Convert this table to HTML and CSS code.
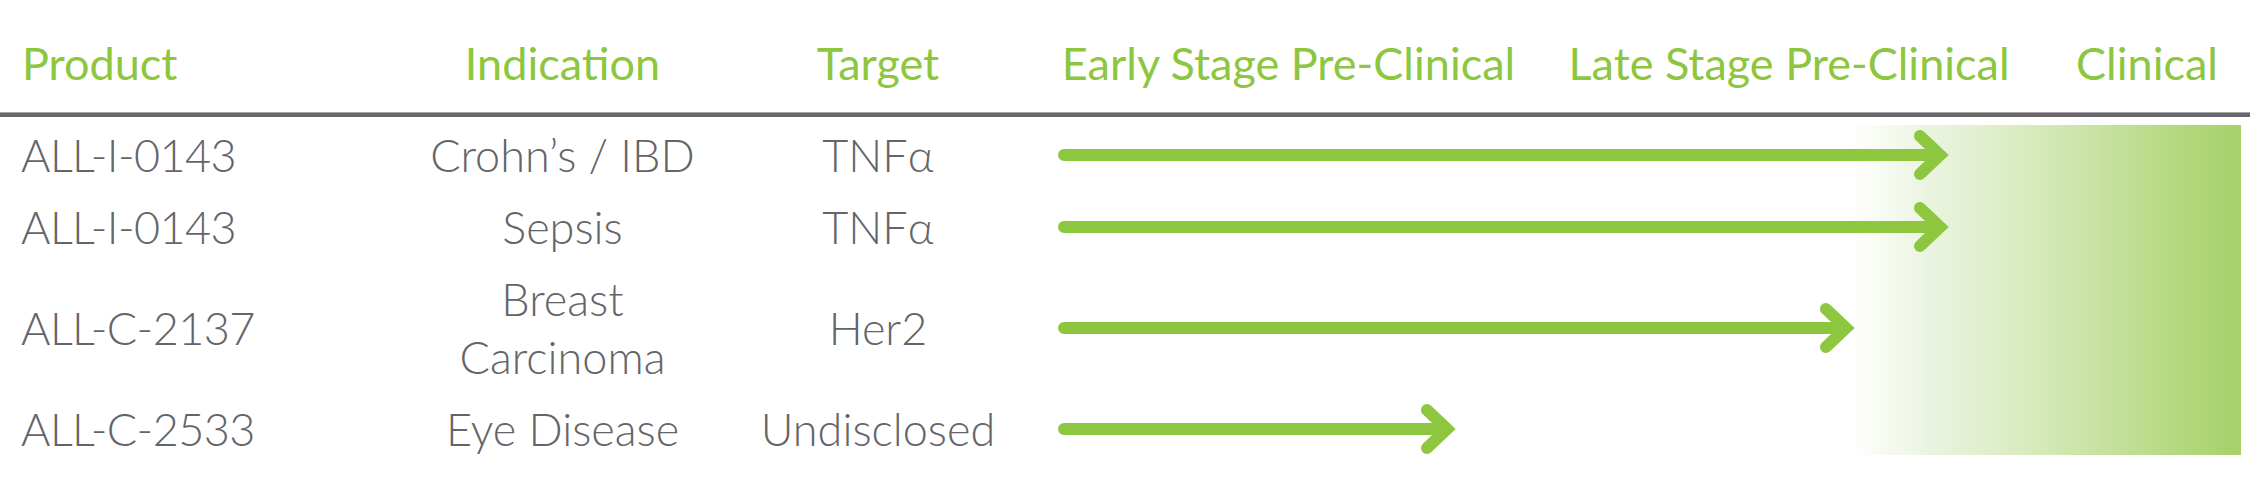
FILE: index.html
```html
<!DOCTYPE html>
<html lang="en">
<head>
<meta charset="utf-8">
<title>Pipeline</title>
<link rel="stylesheet" href="styles.css">
</head>
<body>
<div class="pipeline">
  <div class="head">
    <div class="hcell hleft">Product</div>
    <div class="hcell">Indication</div>
    <div class="hcell">Target</div>
    <div class="hcell">Early Stage Pre-Clinical</div>
    <div class="hcell">Late Stage Pre-Clinical</div>
    <div class="hcell">Clinical</div>
  </div>
  <div class="rule"></div>
  <div class="rows">
    <div class="row">
      <div class="cell code">ALL-I-0143</div>
      <div class="cell">Crohn’s / IBD</div>
      <div class="cell">TNFα</div>
      <div class="progress"><svg class="arrow" style="width:891px" viewBox="0 0 891 52"><path d="M6 26H877M862 7L882 26L862 45"/></svg></div>
    </div>
    <div class="row">
      <div class="cell code">ALL-I-0143</div>
      <div class="cell">Sepsis</div>
      <div class="cell">TNFα</div>
      <div class="progress"><svg class="arrow" style="width:891px" viewBox="0 0 891 52"><path d="M6 26H877M862 7L882 26L862 45"/></svg></div>
    </div>
    <div class="row">
      <div class="cell code">ALL-C-2137</div>
      <div class="cell">Breast<br>Carcinoma</div>
      <div class="cell">Her2</div>
      <div class="progress"><svg class="arrow" style="width:797px" viewBox="0 0 797 52"><path d="M6 26H783M768 7L788 26L768 45"/></svg></div>
    </div>
    <div class="row">
      <div class="cell code">ALL-C-2533</div>
      <div class="cell">Eye Disease</div>
      <div class="cell">Undisclosed</div>
      <div class="progress"><svg class="arrow" style="width:398px" viewBox="0 0 398 52"><path d="M6 26H384M369 7L389 26L369 45"/></svg></div>
    </div>
  </div>
</div>
</body>
</html>
```

FILE: styles.css
```css
html, body {
  margin: 0;
  padding: 0;
  background: #ffffff;
}

.pipeline {
  width: 2250px;
  font-family: "Lato", "Open Sans", sans-serif;
  font-size: 45px;
  line-height: 58px;
}

.head {
  display: grid;
  grid-template-columns: 412px 301px 330px 491px 510px 206px;
  padding: 34px 0 20px;
  color: #8dc63f;
  font-weight: 400;
}

.hcell {
  text-align: center;
  white-space: nowrap;
}

.hcell.hleft {
  text-align: left;
  padding-left: 22px;
}

.rule {
  height: 5px;
  background: linear-gradient(#a4a4a6 0 1px, #68686c 1px 100%);
}

.rows {
  display: flex;
  flex-direction: column;
  padding-top: 2px;
  background: linear-gradient(to right, #ffffff 0%, #e9f3dd 22%, #dcedc6 40%, #c9e3a4 62%, #b5d982 82%, #a6d169 100%) no-repeat;
  background-position: 1851px 8px;
  background-size: 390px 330px;
}

.row {
  display: grid;
  grid-template-columns: 412px 301px 330px 1fr;
  padding: 7px 0;
  color: #646469;
  font-weight: 300;
}

.cell {
  align-self: center;
  text-align: center;
  white-space: nowrap;
}

.cell.code {
  text-align: left;
  padding-left: 21px;
  letter-spacing: -0.6px;
}

.progress {
  display: flex;
  align-items: center;
  padding-left: 15px;
}

.arrow {
  height: 52px;
  display: block;
}

.arrow path {
  fill: none;
  stroke: #8dc63f;
  stroke-width: 12;
  stroke-linecap: round;
  stroke-linejoin: miter;
}
```
